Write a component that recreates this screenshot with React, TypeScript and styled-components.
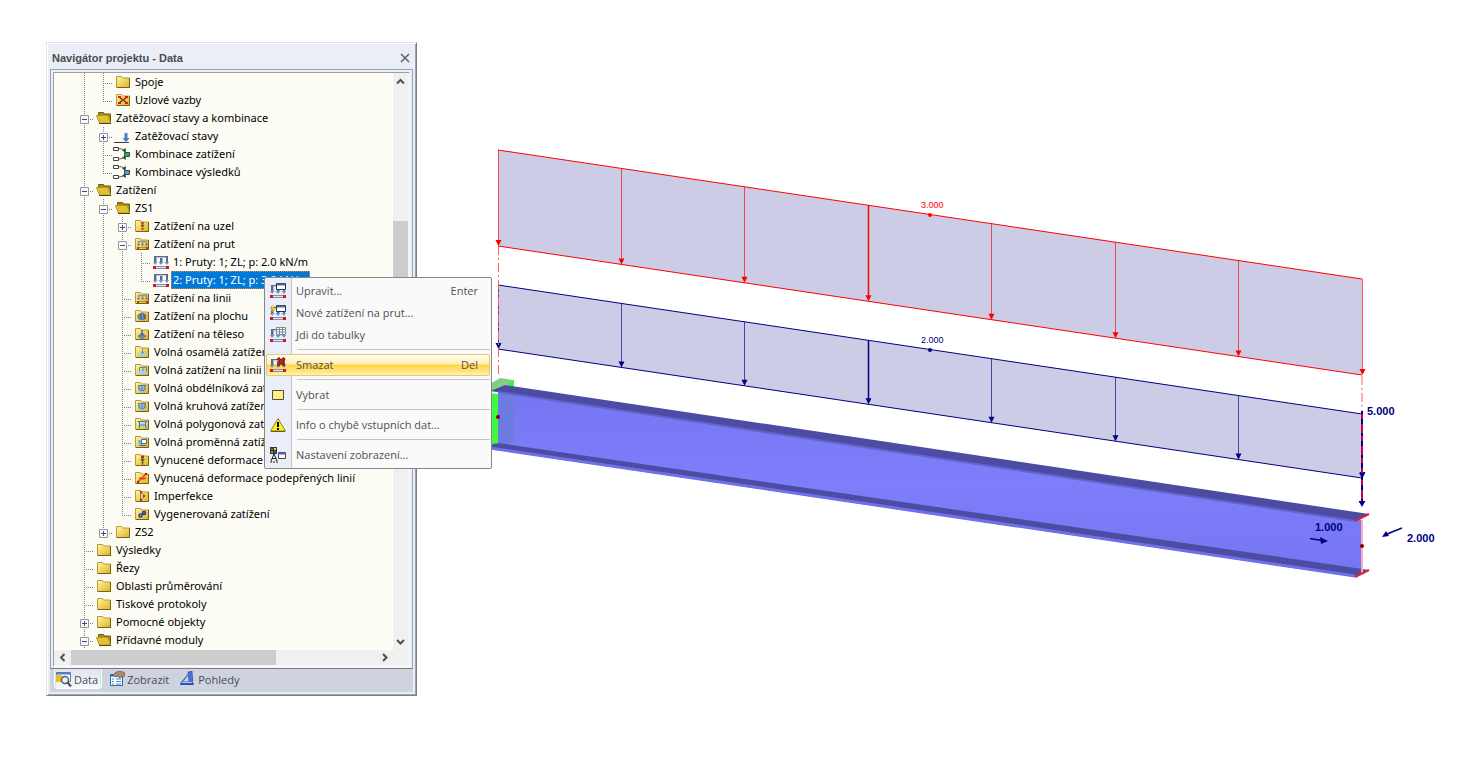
import React, { ReactNode, useState } from 'react';
import styled, { createGlobalStyle, css } from 'styled-components';

type TOverlay =
  | 'nodal' | 'member' | 'surface' | 'solid' | 'point' | 'line' | 'area'
  | 'polygon' | 'variable' | 'forced' | 'forcedLine' | 'imperfection' | 'generated' | 'release';

interface INode {
  level: number
  name: string
  icon: 'folder' | 'open' | 'case' | 'comboLoad' | 'comboResult' | 'load'
  overlay?: TOverlay
  toggle?: '+' | '-'
}

interface IMenuItem {
  name: string
  icon: ReactNode
  shortcut?: string
  separator?: boolean
}

const GlobalStyle = createGlobalStyle`
  * {
    box-sizing: border-box;
  }

  body {
    margin: 0;
    background: #fff;
    font-family: 'Open Sans', 'Noto Sans', sans-serif;
    font-size: 11px;
  }

  button {
    margin: 0;
    padding: 0;
    border: 0;
    background: none;
    color: inherit;
    font: inherit;
  }
`;

const Page = styled.main`
  position: relative;
  display: flex;
  align-items: flex-start;
  padding: 42px 0 0 46px;
`;

const Navigator = styled.section`
  flex: 0 0 371px;
  display: flex;
  flex-direction: column;
  border: 1px solid #e1e7f2;
  border-right: 1px solid #7d7d82;
  border-bottom: 1px solid #7d7d82;
  box-shadow: inset 1px 1px #fff, inset -1px -1px #a0a4b0;
  padding: 2px 3px 3px;
  background: #e9eef7;
`;

const TitleBar = styled.header`
  display: flex;
  align-items: center;
  justify-content: space-between;
  height: 24px;
  padding: 2px 3px 0 2px;
`;

const Title = styled.h1`
  margin: 0;
  color: #4b4b4b;
  font: bold 11px/16px 'Liberation Sans', Arial, sans-serif;
`;

const CloseButton = styled.button`
  display: flex;
  width: 10px;
  height: 10px;
`;

const Pane = styled.div`
  padding: 2px 2px 1px;
  border: 1px solid #a0a4b0;
  border-bottom-color: #7d7d82;
`;

const TreeBox = styled.div`
  display: grid;
  grid-template-columns: 1fr 16px;
  grid-template-rows: auto 16px;
  border: 1px solid #fff;
  border-top-color: #a0a0a0;
  border-left-color: #a0a0a0;
  background: #f0f0f0;
`;

const Tree = styled.ul`
  margin: 0;
  padding: 0 0 0 21px;
  overflow: hidden;
  border-right: 1px solid #fff;
  border-bottom: 1px solid #fff;
  background: #fcfcf4;
  list-style: none;
`;

const Row = styled.li`
  display: flex;
  height: 18px;
  white-space: nowrap;
`;

const Guide = styled.span<{ $line: 'full' | 'half' | 'none', $branch?: boolean }>`
  flex: 0 0 19px;
  padding: 6px 0 0 5px;
  background-repeat: no-repeat;
  background-image:
    repeating-linear-gradient(to bottom, #808080 0 1px, transparent 1px 2px),
    repeating-linear-gradient(to right, #808080 0 1px, transparent 1px 2px);
  background-position: 9px 0, 9px 10px;
  background-size:
    1px ${props => (props.$line === 'full' ? '18px' : props.$line === 'half' ? '10px' : '0')},
    ${props => (props.$branch ? '10px 1px' : '0 0')};
`;

const Toggle = styled.button`
  display: block;
  width: 9px;
  height: 9px;

  svg {
    display: block;
  }
`;

const NodeIcon = styled.span`
  flex: 0 0 20px;
  padding: 1px 0 0 2px;

  svg {
    display: block;
  }
`;

const NodeLabel = styled.button<{ $selected: boolean }>`
  height: 18px;
  padding: 0 2px 1px;
  color: #000;
  font-family: 'Noto Sans', 'Open Sans', sans-serif;
  font-size: 11px;
  line-height: 17px;

  ${props => props.$selected && css`
    outline: 1px dotted #e08a3c;
    outline-offset: -1px;
    background: #0078d7;
    color: #fff;
  `}
`;

const ScrollBar = styled.div<{ $vertical?: boolean }>`
  display: flex;
  flex-direction: ${props => (props.$vertical ? 'column' : 'row')};
  justify-content: space-between;
`;

const ScrollButton = styled.button`
  display: flex;
  flex: 0 0 17px;
  align-items: center;
  justify-content: center;
  width: 15px;
  height: 15px;
`;

const Track = styled.div<{ $vertical?: boolean }>`
  flex: 1;
  padding: ${props => (props.$vertical ? '131px 1px 0 0' : '0')};
`;

const Thumb = styled.div<{ $vertical?: boolean }>`
  width: ${props => (props.$vertical ? '15px' : '205px')};
  height: ${props => (props.$vertical ? '120px' : '15px')};
  background: #cdcdcd;
`;

const Tabs = styled.nav`
  display: flex;
  gap: 5px;
  height: 23px;
  padding: 0 4px;
  background: #ced3dd;
`;

const Tab = styled.button<{ $active: boolean }>`
  display: flex;
  gap: 2px;
  align-items: center;
  height: 20px;
  padding: 1px 3px 0 1px;
  border: 1px solid transparent;
  border-top: 0;
  border-radius: 0 0 4px 4px;
  color: #474d5c;
  font-size: 11px;

  ${props => props.$active && css`
    border-color: #fff;
    background: linear-gradient(#dfe4ec, #f7f8fa);
    box-shadow: inset 1px 0 #bfeaea, inset -1px 0 #bfeaea;
  `}
`;

const Menu = styled.div`
  position: absolute;
  top: 277px;
  left: 264px;
  width: 228px;
  padding: 2px 1px;
  border: 1px solid #868686;
  border-radius: 2px;
  background: linear-gradient(to right, #e9eef8 26px, #c5c5c5 26px 27px, #fafafa 27px);
`;

const MenuItem = styled.button<{ $active: boolean }>`
  display: grid;
  grid-template-columns: 29px 1fr auto;
  align-items: center;
  width: 100%;
  height: 22px;
  padding: 0 11px 0 0;
  border: 1px solid transparent;
  color: #505050;
  font-size: 11px;
  text-align: left;

  svg {
    display: block;
    margin-left: 3px;
  }

  span {
    padding-bottom: 2px;
  }

  ${props => props.$active && css`
    border-color: #e3c878;
    border-radius: 2px;
    background: linear-gradient(#fffdf0, #ffeeb4 45%, #ffd53f 50%, #ffe27c 80%, #fff2b4);
  `}
`;

const Separator = styled.hr`
  height: 1px;
  margin: 3px 0 4px 31px;
  border: 0;
  background: #c5c5c5;
`;

const Viewport = styled.section`
  flex: 1;
  min-width: 0;

  svg {
    display: block;
    width: 100%;
  }
`;

const ValueText = styled.text<{ $strong?: boolean }>`
  font-family: 'Liberation Sans', Arial, sans-serif;
  font-size: ${props => (props.$strong ? '11px' : '9px')};
  font-weight: ${props => (props.$strong ? 'bold' : 'normal')};
`;

const nodes: INode[] = [
  { level: 1, name: 'Spoje', icon: 'folder' },
  { level: 1, name: 'Uzlové vazby', icon: 'folder', overlay: 'release' },
  { level: 0, name: 'Zatěžovací stavy a kombinace', icon: 'open', toggle: '-' },
  { level: 1, name: 'Zatěžovací stavy', icon: 'case', toggle: '+' },
  { level: 1, name: 'Kombinace zatížení', icon: 'comboLoad' },
  { level: 1, name: 'Kombinace výsledků', icon: 'comboResult' },
  { level: 0, name: 'Zatížení', icon: 'open', toggle: '-' },
  { level: 1, name: 'ZS1', icon: 'open', toggle: '-' },
  { level: 2, name: 'Zatížení na uzel', icon: 'folder', overlay: 'nodal', toggle: '+' },
  { level: 2, name: 'Zatížení na prut', icon: 'folder', overlay: 'member', toggle: '-' },
  { level: 3, name: '1: Pruty: 1; ZL; p: 2.0 kN/m', icon: 'load' },
  { level: 3, name: '2: Pruty: 1; ZL; p: 3.0 kN/m', icon: 'load' },
  { level: 2, name: 'Zatížení na linii', icon: 'folder', overlay: 'member' },
  { level: 2, name: 'Zatížení na plochu', icon: 'folder', overlay: 'surface' },
  { level: 2, name: 'Zatížení na těleso', icon: 'folder', overlay: 'solid' },
  { level: 2, name: 'Volná osamělá zatížení', icon: 'folder', overlay: 'point' },
  { level: 2, name: 'Volná zatížení na linii', icon: 'folder', overlay: 'line' },
  { level: 2, name: 'Volná obdélníková zatížení', icon: 'folder', overlay: 'area' },
  { level: 2, name: 'Volná kruhová zatížení', icon: 'folder', overlay: 'area' },
  { level: 2, name: 'Volná polygonová zatížení', icon: 'folder', overlay: 'polygon' },
  { level: 2, name: 'Volná proměnná zatížení', icon: 'folder', overlay: 'variable' },
  { level: 2, name: 'Vynucené deformace uzlů', icon: 'folder', overlay: 'forced' },
  { level: 2, name: 'Vynucená deformace podepřených linií', icon: 'folder', overlay: 'forcedLine' },
  { level: 2, name: 'Imperfekce', icon: 'folder', overlay: 'imperfection' },
  { level: 2, name: 'Vygenerovaná zatížení', icon: 'folder', overlay: 'generated' },
  { level: 1, name: 'ZS2', icon: 'folder', toggle: '+' },
  { level: 0, name: 'Výsledky', icon: 'folder' },
  { level: 0, name: 'Řezy', icon: 'folder' },
  { level: 0, name: 'Oblasti průměrování', icon: 'folder' },
  { level: 0, name: 'Tiskové protokoly', icon: 'folder' },
  { level: 0, name: 'Pomocné objekty', icon: 'folder', toggle: '+' },
  { level: 0, name: 'Přídavné moduly', icon: 'open', toggle: '-' }
];

/**
 * 判断某一层级在当前行之后是否还有同级节点
 */
const continues = (index: number, level: number) => {
  if (level === 0) return true;

  const next = nodes.slice(index + 1).find(node => node.level <= level);

  return !!next && next.level === level;
};

const overlays: Record<TOverlay, ReactNode> = {
  release: (
    <g>
      <path d="M4 5l8 6M4 11l8-6" stroke="#3a3010" strokeWidth="1.2" />
      <path d="M3 4h3v2H3zM10 4h3v2h-3zM3 10h3v2H3zM10 10h3v2h-3zM7 7h2v2H7z" fill="#e01818" />
    </g>
  ),
  nodal: (
    <g>
      <path d="M8.500 4v5" stroke="#9a7420" strokeWidth="2" />
      <path d="M6.500 7h4l-2 3z" fill="#8a5a18" />
      <path d="M7.500 4h2v2h-2zM7.500 10h2v2h-2z" fill="#e03018" />
    </g>
  ),
  member: (
    <g>
      <path d="M4.500 9V5.500h8V9M8.500 5v4" stroke="#8c9a9c" strokeWidth="1.500" fill="none" />
      <path d="M3 8h3l-1.500 2zM7 8h3l-1.500 2zM11 8h3l-1.500 2z" fill="#6c7c8c" />
      <path d="M4 11.500h9" stroke="#a89048" />
      <path d="M3 11h2v2H3zM12 11h2v2h-2z" fill="#e02818" />
    </g>
  ),
  surface: (
    <g>
      <path d="M4 7l4-2 4 2-1 4-4 1-3-2z" fill="#6c94c8" stroke="#5c6c80" />
      <path d="M7 6v5M10 6v4" stroke="#34507c" />
      <path d="M10 9h2v2h-2z" fill="#c84028" />
    </g>
  ),
  solid: (
    <g>
      <path d="M4 10l4-2 4 2-4 3z" fill="#7490b0" stroke="#66748c" />
      <path d="M8 4v5M6.500 7.500L8 9.500l1.500-2" stroke="#4c6c9c" strokeWidth="1.500" fill="none" />
    </g>
  ),
  point: (
    <g>
      <path d="M3 12l3-3h8l-3 3z" fill="#9cd4f0" />
      <path d="M8.500 4v5M7 7.500l1.500 2 1.500-2" stroke="#5c98c8" fill="none" />
    </g>
  ),
  line: (
    <g>
      <path d="M3 12l3-4h8l-3 4z" fill="#9cd4f0" />
      <path d="M5.500 9V5.500h7V9M9 5v4" stroke="#5c84b8" fill="none" />
    </g>
  ),
  area: (
    <g>
      <path d="M4 6l4 1 4-2v5l-4 3-4-3z" fill="#8cbce8" />
      <path d="M4 5.500h8M5 6v3l2 2M8 6v5M11 6v3l-2 2" stroke="#55789c" fill="none" />
    </g>
  ),
  polygon: (
    <g>
      <path d="M4 5h9v4h-2v3h-1V9H7v3H6V9H4z" fill="#b4dcf4" />
      <path d="M3.500 5.500h10M5.500 5v7M11.500 5v7M6 9h5" stroke="#4c78a8" fill="none" />
    </g>
  ),
  variable: (
    <g>
      <path d="M4 6h4v6H5z" fill="#7cb0e0" />
      <path d="M7.500 5.500h5v4h-5z" fill="#fff" stroke="#456f9a" />
      <path d="M6 11.500h6" stroke="#3e68a0" />
    </g>
  ),
  forced: (
    <g>
      <path d="M8.500 4v8" stroke="#5a5020" strokeWidth="1.500" />
      <path d="M7 3.500h3v2.500H7z" fill="#e01818" />
      <path d="M6 7h5l-2.500 3z" fill="#1e8a30" />
      <path d="M8 11h1v2H8z" fill="#e01818" />
    </g>
  ),
  forcedLine: (
    <g>
      <path d="M4 12l8-8M5 8l4 1 3-1" stroke="#e04018" strokeWidth="1.500" fill="none" />
      <path d="M3 11h2v2H3zM11 3h2v2h-2z" fill="#c81010" />
    </g>
  ),
  imperfection: (
    <g>
      <path d="M6.500 4.500q7 3.500 0 7.500M6.500 4v8" stroke="#7c8478" fill="none" />
      <path d="M6 3h2v2H6zM6 11h2v2H6zM9 7h2v2H9z" fill="#e01818" />
    </g>
  ),
  generated: (
    <g>
      <circle cx="6.500" cy="9.500" r="1.500" stroke="#273c7c" strokeWidth="1.500" fill="#c8d0e8" />
      <circle cx="10" cy="7" r="1.500" stroke="#273c7c" strokeWidth="1.500" fill="#8894c8" />
    </g>
  )
};

const FolderIcon = ({ overlay }: { overlay?: TOverlay }) => (
  <svg width="16" height="16" viewBox="0 0 16 16" aria-hidden="true">
    <defs>
      <linearGradient id="folderFill" x1="0" y1="0" x2="1" y2="1">
        <stop offset="0" stopColor="#fff6a8" />
        <stop offset="1" stopColor="#dfb41c" />
      </linearGradient>
    </defs>
    <path d="M1.500 2.500h5l1 1.500h7v9.500h-13z" fill="url(#folderFill)" stroke="#b89c34" />
    <path d="M14.500 4v9.500H2" fill="none" stroke="#75611a" />
    {overlay && overlays[overlay]}
  </svg>
);

const OpenFolderIcon = () => (
  <svg width="16" height="16" viewBox="0 0 16 16" aria-hidden="true">
    <path d="M2.500 2.500h5l1 1.500h6v9h-11z" fill="#a98a12" stroke="#6e5a14" />
    <path d="M.5 5.500h11.500l2.500 7.500h-11z" fill="#e0c234" stroke="#b4961e" />
    <path d="M3 13.500h12" stroke="#55460c" />
  </svg>
);

const CaseIcon = () => (
  <svg width="16" height="16" viewBox="0 0 16 16" overflow="visible" aria-hidden="true">
    <path d="M-1 14.500h15" stroke="#3c3c3c" />
    <path d="M9.500 5h3v5h2L11 14.500 7.500 10h2z" fill="#4a78d0" stroke="#b4c4e0" strokeWidth=".5" />
  </svg>
);

const ComboIcon = ({ color }: { color: string }) => (
  <svg width="16" height="16" viewBox="0 0 16 16" overflow="visible" aria-hidden="true">
    <path d="M-1.500 1.500h5v3h-5zM-1.500 11.500h5v3h-5z" fill="#fff" stroke="#404040" />
    <path d="M4 2.500q5 0 6.500 3M4 13q5 0 6.500-3" stroke="#666" fill="none" />
    <path d="M10.500 6.500L7 4.500 11 2zM10.500 9.500L7 11.500l4 2.500z" fill="#3c3c3c" />
    <path d="M9.500 6.500h5v4h-5z" fill={color} stroke="#33503c" />
  </svg>
);

const Beam = () => (
  <g>
    <path d="M1 13.500h14" stroke="#8490a8" strokeWidth="3" />
    <path d="M2 13.500h12" stroke="#dce2f0" />
    <path d="M0 12h3v3H0zM13 12h3v3h-3z" fill="#d81414" />
  </g>
);

const LoadArrows = () => (
  <g fill="none">
    <path d="M2 8.500V3h12v6M8 3v6" stroke="#5c6c88" strokeWidth="2" />
    <path d="M3 3.500h10" stroke="#b4c8ec" />
    <path d="M3.500 4v4M9.500 4v4" stroke="#9cb8e4" />
    <path d="M0 8h4.500L2 11zM5.500 8h5L8 11zM11.500 8H16l-2 3z" fill="#6a92d2" />
  </g>
);

const LoadIcon = ({ children }: { children?: ReactNode }) => (
  <svg width="16" height="16" viewBox="0 0 16 16" aria-hidden="true">
    <LoadArrows />
    <Beam />
    {children}
  </svg>
);

const WindowMark = () => (
  <g>
    <path d="M6.500.5h9v6h-9z" fill="#fff" stroke="#2c3448" />
    <path d="M7 1.500h8" stroke="#566890" strokeWidth="2" />
  </g>
);

const menuItems: IMenuItem[] = [
  { name: 'Upravit...', shortcut: 'Enter', icon: <LoadIcon><WindowMark /></LoadIcon> },
  {
    name: 'Nové zatížení na prut...',
    icon: (
      <LoadIcon>
        <WindowMark />
        <path d="M3 0v7M0 3.500h6M1 1l4 5M5 1L1 6" stroke="#d8c820" />
      </LoadIcon>
    )
  },
  {
    name: 'Jdi do tabulky',
    icon: (
      <LoadIcon>
        <path d="M6.500.5h9v7h-9z" fill="#fff" stroke="#808894" />
        <path d="M6 2.500h10M6 5h10M9.500 0v8M12.500 0v8" stroke="#808894" />
      </LoadIcon>
    )
  },
  {
    name: 'Smazat',
    shortcut: 'Del',
    separator: true,
    icon: (
      <LoadIcon>
        <path d="M8 1l6.500 7.500M14.500 1L8 8.500" stroke="#701010" strokeWidth="3" />
        <path d="M8 1l6.500 7.500M14.500 1L8 8.500" stroke="#d01c1c" strokeWidth="1.500" />
      </LoadIcon>
    )
  },
  {
    name: 'Vybrat',
    separator: true,
    icon: (
      <svg width="16" height="16" viewBox="0 0 16 16" aria-hidden="true">
        <path d="M2.500 3.500h11v9h-11z" fill="#fff27c" stroke="#4c4c4c" />
      </svg>
    )
  },
  {
    name: 'Info o chybě vstupních dat...',
    separator: true,
    icon: (
      <svg width="16" height="16" viewBox="0 0 16 16" aria-hidden="true">
        <path d="M8 1.500L15.500 14H.5z" fill="#fff01c" stroke="#8c8420" strokeLinejoin="round" />
        <path d="M1 14.500h14" stroke="#5c5838" />
        <path d="M8 5v5M8 11v2" stroke="#000" strokeWidth="2" />
      </svg>
    )
  },
  {
    name: 'Nastavení zobrazení...',
    separator: true,
    icon: (
      <svg width="16" height="16" viewBox="0 0 16 16" aria-hidden="true">
        <path d="M0 0h7v7H0z" fill="#333" />
        <path d="M1 1h2v2H1z" fill="#f02020" />
        <path d="M4 1h2v2H4z" fill="#f0e020" />
        <path d="M1 4h2v2H1z" fill="#20c040" />
        <path d="M4 4h2v2H4z" fill="#3050f0" />
        <path d="M1 14l3-7 3 7M2 11.500h4M0 15h2M3 15h2M6 15h2" stroke="#222" fill="none" />
        <path d="M8.500 5.500h7v6h-7z" fill="#fff" stroke="#444" />
        <path d="M8 6.500h8" stroke="#5c6494" strokeWidth="2" />
      </svg>
    )
  }
];

const tabs = [
  {
    name: 'Data',
    icon: (
      <svg width="16" height="16" viewBox="0 0 16 16" aria-hidden="true">
        <path d="M.5 1.500h14v9H.5z" fill="#fff" stroke="#4a80c8" />
        <path d="M1 2.500h13" stroke="#4a80c8" strokeWidth="2" />
        <path d="M0 4h5l1 1h4v6H0z" fill="#f4b820" />
        <circle cx="9" cy="9" r="3.500" fill="#e8f4fc" stroke="#5c5c68" strokeWidth="1.500" />
        <path d="M11.500 11.500l3.500 4" stroke="#484854" strokeWidth="2" />
      </svg>
    )
  },
  {
    name: 'Zobrazit',
    icon: (
      <svg width="16" height="16" viewBox="0 0 16 16" aria-hidden="true">
        <path d="M1.500 3.500h12v11h-12z" fill="#fff" stroke="#2a68b8" />
        <path d="M1 4.500h11" stroke="#2a68b8" strokeWidth="2" />
        <path d="M3 8h2M7 8h5M3 10.500h2M7 10.500h5M3 13h2M7 13h5" stroke="#4a88d8" />
        <path d="M4 4l3-3 5-1 4 2v3l-6 2-1-2-3 1z" fill="#b08870" stroke="#443834" strokeWidth=".5" />
      </svg>
    )
  },
  {
    name: 'Pohledy',
    icon: (
      <svg width="16" height="16" viewBox="0 0 16 16" aria-hidden="true">
        <path d="M8 1l4-1 1 10-4 1z" fill="#4a70d8" stroke="#22388c" strokeWidth=".5" />
        <path d="M8.500 3L2 11h7" fill="none" stroke="#5878d0" strokeWidth="1.500" />
        <path d="M1 11h12l1 3H0z" fill="#3052b8" />
        <path d="M2 11.500h10" stroke="#b4c8f4" />
      </svg>
    )
  }
];

const Chevron = ({ d }: { d: string }) => (
  <svg width="9" height="9" viewBox="0 0 9 9" aria-hidden="true">
    <path d={d} fill="none" stroke="#505050" strokeWidth="2" />
  </svg>
);

const renderIcon = (node: INode) => {
  switch (node.icon) {
    case 'open':
      return <OpenFolderIcon />;
    case 'case':
      return <CaseIcon />;
    case 'comboLoad':
      return <ComboIcon color="#20b848" />;
    case 'comboResult':
      return <ComboIcon color="#5c98e8" />;
    case 'load':
      return <LoadIcon />;
    default:
      return <FolderIcon overlay={node.overlay} />;
  }
};

interface ILineLoad {
  top: number
  height: number
  color: string
  value: string
}

const LEFT = 498;
const RIGHT = 1362;
const DROP = 129;
const STEPS = 7;

/**
 * 线荷载（平行四边形 + 箭头）
 */
const LineLoad = ({ top, height, color, value }: ILineLoad) => {
  const arrows = Array.from({ length: STEPS + 1 }, (_, i) => ({
    x: Math.floor(LEFT + ((RIGHT - LEFT) * i) / STEPS) + 0.5,
    y: top + (DROP * i) / STEPS,
    bold: i === 3
  }));

  return (
    <g stroke={color} fill={color}>
      <path
        d={`M${LEFT} ${top}L${RIGHT} ${top + DROP}v${height}L${LEFT} ${top + height}z`}
        fill="#cccce6"
        stroke="none"
      />
      <path d={`M${LEFT} ${top}L${RIGHT} ${top + DROP}M${LEFT} ${top + height}L${RIGHT} ${top + DROP + height}`} />
      {arrows.map(({ x, y, bold }) => (
        <g key={x}>
          <path d={`M${x} ${y}v${height - 4}`} strokeWidth={bold ? 1.5 : 1} strokeOpacity={bold ? 1 : 0.65} />
          <path d={`M${x - 3} ${y + height - 6}h6l-3 6z`} stroke="none" />
        </g>
      ))}
      <circle cx="930" cy={top + 65} r="2" stroke="none" />
      <ValueText x="921" y={top + 58} stroke="none">{value}</ValueText>
    </g>
  );
};

const Scene = () => (
  <svg viewBox="417 42 1058 740" role="img" aria-label="Model">
    <defs>
      <linearGradient id="web" x1="0" y1="0" x2="0" y2="1">
        <stop offset="0" stopColor="#7676f2" />
        <stop offset=".5" stopColor="#7e7efa" />
        <stop offset="1" stopColor="#7676f2" />
      </linearGradient>
    </defs>

    <LineLoad top={150} height={96} color="#ff0000" value="3.000" />
    <LineLoad top={285} height={64} color="#000080" value="2.000" />
    <path d="M498.500 246V376" stroke="#ff6060" strokeDasharray="9 3 2 3" />
    <path d="M1362 376V412" stroke="#ffb0b0" strokeWidth="2" strokeDasharray="9 3 2 3" />

    {/* 支座 */}
    <path d="M490 384l10-6 14 2v6l-9-1-15 6z" fill="#80d080" />
    <path d="M509 382l5-1v6l-5-1z" fill="#40f040" />
    <path d="M490 393l8 1v49l-8 4z" fill="#40fa40" />

    <path d="M498 391L1362 520V573L498 446z" fill="url(#web)" />
    <path d="M498 393l16 3v45l-16 6z" fill="#6c7ce0" />
    <path d="M490 391l15-6L1369 514l-14 7z" fill="#4c4ca2" />
    <path d="M498 392L1355 521" stroke="#6464d0" strokeWidth="2" />
    <path d="M490 445l8-2L1369 570l-14 7L490 449z" fill="#4c4ca2" />
    <path d="M490 448L1355 576" stroke="#7070ea" strokeWidth="3" />

    <path d="M1362 520v53" stroke="#ffa8c0" strokeWidth="2" />
    <path d="M1355 521l14-7M1355 577l14-7" stroke="#e02038" strokeWidth="2" />
    <circle cx="498" cy="417" r="2" fill="#800000" />
    <circle cx="1362" cy="546" r="2" fill="#800000" />

    {/* 集中力 */}
    <path d="M1362 411v91" stroke="#c80050" strokeWidth="2" />
    <path d="M1362 411v91" stroke="#000080" strokeWidth="2" strokeDasharray="3 5 5 9" />
    <g fill="#000080" stroke="none">
      <path d="M1358.500 501h7l-3.500 6z" />
      <path d="M1359 473h6l-3 5z" />
      <path d="M1328 541l-8-4 1 7z" />
      <path d="M1382 537l4-6 3 5z" />
      <ValueText $strong x="1367" y="415">5.000</ValueText>
      <ValueText $strong x="1315" y="531">1.000</ValueText>
      <ValueText $strong x="1407" y="542">2.000</ValueText>
    </g>
    <path d="M1310 538.500l12 2M1402 528l-15 6" stroke="#000080" strokeWidth="1.500" />
  </svg>
);

const App = () => {
  const [selected, setSelected] = useState(11);
  const [tab, setTab] = useState('Data');

  return (
    <Page>
      <GlobalStyle />
      <Navigator>
        <TitleBar>
          <Title>Navigátor projektu - Data</Title>
          <CloseButton aria-label="Zavřít">
            <svg width="10" height="10" viewBox="0 0 10 10">
              <path d="M1 1l8 8M9 1L1 9" stroke="#606060" strokeWidth="1.500" />
            </svg>
          </CloseButton>
        </TitleBar>
        <Pane>
          <TreeBox>
            <Tree>
              {nodes.map((node, index) => (
                <Row key={node.name}>
                  {Array.from({ length: node.level }, (_, level) => (
                    <Guide key={level} $line={continues(index, level) ? 'full' : 'none'} />
                  ))}
                  <Guide $branch $line={continues(index, node.level) ? 'full' : 'half'}>
                    {node.toggle && (
                      <Toggle aria-label={node.name}>
                        <svg width="9" height="9" viewBox="0 0 9 9">
                          <path d="M.5.5h8v8h-8z" fill="#fafafa" stroke="#969696" />
                          <path d={node.toggle === '+' ? 'M2 4.500h5M4.500 2v5' : 'M2 4.500h5'} stroke="#3450a0" />
                        </svg>
                      </Toggle>
                    )}
                  </Guide>
                  <NodeIcon>{renderIcon(node)}</NodeIcon>
                  <NodeLabel $selected={selected === index} onClick={() => setSelected(index)}>
                    {node.name}
                  </NodeLabel>
                </Row>
              ))}
            </Tree>
            <ScrollBar $vertical>
              <ScrollButton aria-label="Nahoru"><Chevron d="M1 6.500L4.500 3 8 6.500" /></ScrollButton>
              <Track $vertical><Thumb $vertical /></Track>
              <ScrollButton aria-label="Dolů"><Chevron d="M1 3l3.500 3.500L8 3" /></ScrollButton>
            </ScrollBar>
            <ScrollBar>
              <ScrollButton aria-label="Vlevo"><Chevron d="M6.500 1L3 4.500 6.500 8" /></ScrollButton>
              <Track><Thumb /></Track>
              <ScrollButton aria-label="Vpravo"><Chevron d="M3 1l3.500 3.500L3 8" /></ScrollButton>
            </ScrollBar>
          </TreeBox>
        </Pane>
        <Tabs>
          {tabs.map(({ name, icon }) => (
            <Tab key={name} $active={tab === name} onClick={() => setTab(name)}>
              {icon}
              {name}
            </Tab>
          ))}
        </Tabs>
      </Navigator>

      <Viewport>
        <Scene />
      </Viewport>

      <Menu role="menu">
        {menuItems.map(({ name, icon, shortcut, separator }) => (
          <React.Fragment key={name}>
            {separator && <Separator />}
            <MenuItem role="menuitem" $active={name === 'Smazat'}>
              {icon}
              <span>{name}</span>
              <span>{shortcut}</span>
            </MenuItem>
          </React.Fragment>
        ))}
      </Menu>
    </Page>
  );
};

export default App;
